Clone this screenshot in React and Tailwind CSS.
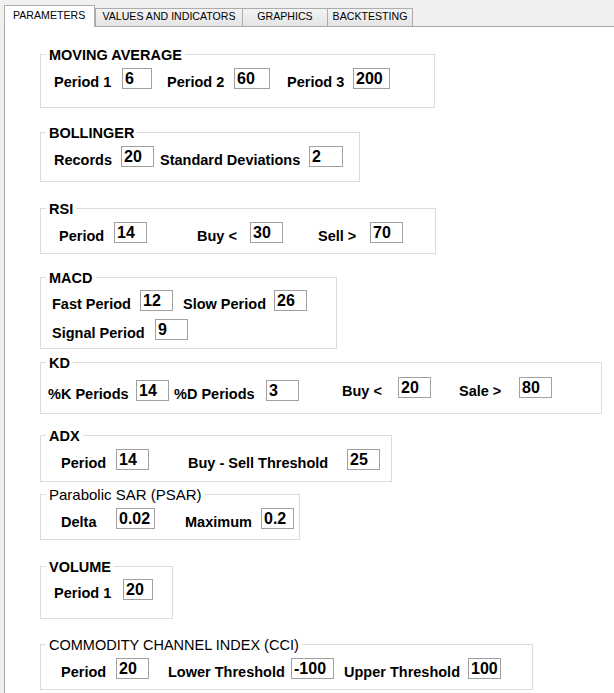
import clsx from "clsx";

function Tab({ label, selected, className }) {
  if (selected) {
    return (
      <div
        className={clsx(
          "relative z-10 -mb-px h-[22px] border-x border-t border-[#acacac] bg-white pl-[8px] pt-[3px] leading-[13px]",
          className
        )}
      >
        {label}
      </div>
    );
  }
  return (
    <div
      className={clsx(
        "h-[18px] border-t border-r border-[#acacac] bg-linear-to-b from-[#f3f3f3] to-[#e4e4e4] pt-px text-center leading-[13px]",
        className
      )}
    >
      {label}
    </div>
  );
}

function Group({ title, plain, className, titleClass, children }) {
  return (
    <div className={clsx("shrink-0 border border-[#dcdcdc]", className)}>
      <div
        className={clsx(
          "-mt-[8px] ml-[5px] w-fit whitespace-nowrap bg-white px-[3px] leading-[16px]",
          plain ? "font-normal" : "font-bold",
          titleClass
        )}
      >
        {title}
      </div>
      {children}
    </div>
  );
}

function Field({ label, value, className, labelClass, inputClass }) {
  return (
    <div className={clsx("flex items-end", className)}>
      <span className={clsx("whitespace-nowrap font-bold leading-[14px]", labelClass)}>
        {label}
      </span>
      <div
        className={clsx(
          "h-[21px] shrink-0 border border-[#a0a0a0] bg-white pl-[2px] text-[16px] font-bold leading-[19px]",
          inputClass
        )}
      >
        {value}
      </div>
    </div>
  );
}

export default function App() {
  return (
    <div className="h-[693px] w-[614px] overflow-hidden bg-[#f0f0f0] font-['Liberation_Sans',Arial,sans-serif] text-black">
      <div className="flex h-[26px] items-end pl-[4px] text-[10.6px]">
        <Tab selected label="PARAMETERS" className="w-[91px]" />
        <Tab label="VALUES AND INDICATORS" className="w-[148px] border-l" />
        <Tab label="GRAPHICS" className="w-[85px]" />
        <Tab label="BACKTESTING" className="w-[85px]" />
      </div>

      <div className="ml-[4px] flex h-[667px] flex-col items-start border-l border-t border-[#a9a9a9] bg-white pl-[35px] text-[14.5px]">
        <Group title="MOVING AVERAGE" className="mt-[27px] h-[54px] w-[395px]">
          <div className="mt-[5px] flex items-start">
            <Field label="Period 1" value="6" className="ml-[13px]" labelClass="w-[68px]" inputClass="w-[30px]" />
            <Field label="Period 2" value="60" className="ml-[15px]" labelClass="w-[67px]" inputClass="w-[36px]" />
            <Field label="Period 3" value="200" className="ml-[17px]" labelClass="w-[66px]" inputClass="w-[37px]" />
          </div>
        </Group>

        <Group title="BOLLINGER" className="mt-[24px] h-[50px] w-[320px]">
          <div className="mt-[5px] flex items-start">
            <Field label="Records" value="20" className="ml-[13px]" labelClass="w-[67px]" inputClass="w-[33px]" />
            <Field label="Standard Deviations" value="2" className="ml-[6px]" labelClass="w-[149px]" inputClass="w-[34px]" />
          </div>
        </Group>

        <Group title="RSI" className="mt-[26px] h-[46px] w-[396px]">
          <div className="mt-[5px] flex items-start">
            <Field label="Period" value="14" className="ml-[18px]" labelClass="w-[55px]" inputClass="w-[33px]" />
            <Field label="Buy <" value="30" className="ml-[50px]" labelClass="w-[53px]" inputClass="w-[33px]" />
            <Field label="Sell >" value="70" className="ml-[35px]" labelClass="w-[52px]" inputClass="w-[33px]" />
          </div>
        </Group>

        <Group title="MACD" className="mt-[23px] h-[72px] w-[297px]">
          <div className="mt-[4px] flex items-start">
            <Field label="Fast Period" value="12" className="ml-[11px]" labelClass="w-[88px]" inputClass="w-[33px]" />
            <Field label="Slow Period" value="26" className="ml-[10px]" labelClass="w-[91px]" inputClass="w-[33px]" />
          </div>
          <div className="mt-[8px] flex items-start">
            <Field label="Signal Period" value="9" className="ml-[11px]" labelClass="w-[103px]" inputClass="w-[33px]" />
          </div>
        </Group>

        <Group title="KD" className="mt-[13px] h-[52px] w-[562px]">
          <div className="mt-[6px] flex items-start">
            <Field label="%K Periods" value="14" className="ml-[7px] mt-[3px]" labelClass="w-[88px]" inputClass="w-[33px]" />
            <Field label="%D Periods" value="3" className="ml-[5px] mt-[3px]" labelClass="w-[92px]" inputClass="w-[33px]" />
            <Field label="Buy <" value="20" className="ml-[43px]" labelClass="w-[56px]" inputClass="w-[33px]" />
            <Field label="Sale >" value="80" className="ml-[28px]" labelClass="w-[60px]" inputClass="w-[33px]" />
          </div>
        </Group>

        <Group title="ADX" className="mt-[21px] h-[47px] w-[352px]">
          <div className="mt-[5px] flex items-start">
            <Field label="Period" value="14" className="ml-[20px]" labelClass="w-[55px]" inputClass="w-[33px]" />
            <Field label="Buy - Sell Threshold" value="25" className="ml-[39px]" labelClass="w-[159px]" inputClass="w-[33px]" />
          </div>
        </Group>

        <Group plain title="Parabolic SAR (PSAR)" className="mt-[12px] h-[46px] w-[260px]" titleClass="text-[15px]">
          <div className="mt-[5px] flex items-start">
            <Field label="Delta" value="0.02" className="ml-[20px]" labelClass="w-[55px]" inputClass="w-[39px]" />
            <Field label="Maximum" value="0.2" className="ml-[30px]" labelClass="w-[76px]" inputClass="w-[33px]" />
          </div>
        </Group>

        <Group title="VOLUME" className="mt-[26px] h-[53px] w-[133px]">
          <div className="mt-[4px] flex items-start">
            <Field label="Period 1" value="20" className="ml-[13px]" labelClass="w-[69px]" inputClass="w-[30px]" />
          </div>
        </Group>

        <Group plain title="COMMODITY CHANNEL INDEX (CCI)" className="mt-[25px] h-[46px] w-[493px]">
          <div className="mt-[5px] flex items-start">
            <Field label="Period" value="20" className="ml-[20px]" labelClass="w-[55px]" inputClass="w-[33px]" />
            <Field label="Lower Threshold" value="-100" className="ml-[19px]" labelClass="w-[123px]" inputClass="w-[43px]" />
            <Field label="Upper Threshold" value="100" className="ml-[10px]" labelClass="w-[124px]" inputClass="w-[33px]" />
          </div>
        </Group>
      </div>
    </div>
  );
}
